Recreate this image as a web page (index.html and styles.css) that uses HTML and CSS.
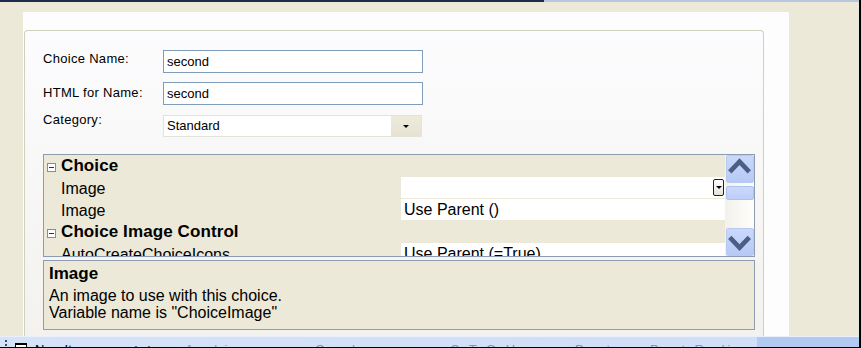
FILE: index.html
```html
<!DOCTYPE html>
<html>
<head>
<meta charset="utf-8">
<link rel="stylesheet" href="styles.css">
</head>
<body>
<div class="frame">
  <div class="topline"></div>
  <div class="main">
    <div class="leftstrip"></div>
    <div class="panel">
      <div class="groupbox">
        <div class="form">
          <div class="lbl l1">Choice Name:</div>
          <div class="input">second</div>
          <div class="lbl l2">HTML for Name:</div>
          <div class="input">second</div>
          <div class="lbl l3">Category:</div>
          <div class="combo"><span class="combo-text">Standard</span><span class="combo-btn"><span class="tri"></span></span></div>
        </div>
        <div class="pgrid">
          <div class="rows">
            <div class="row cat"><span class="toggle"><span class="minus"></span></span><span class="catname">Choice</span></div>
            <div class="row prop"><span class="name">Image</span><span class="val val-dd"><span class="ddbtn"><span class="tri"></span></span></span></div>
            <div class="row prop"><span class="name">Image</span><span class="val">Use Parent ()</span></div>
            <div class="row cat"><span class="toggle"><span class="minus"></span></span><span class="catname">Choice Image Control</span></div>
            <div class="row prop"><span class="name">AutoCreateChoiceIcons</span><span class="val">Use Parent (=True)</span></div>
          </div>
          <div class="vscroll">
            <div class="sbtn"><svg width="28" height="28" viewBox="0 0 28 28"><polyline points="3,17 13.5,6 24,17" fill="none" stroke="#4A5E86" stroke-width="5" stroke-linejoin="miter"/></svg></div>
            <div class="thumb"></div>
            <div class="track"></div>
            <div class="sbtn"><svg width="28" height="28" viewBox="0 0 28 28"><polyline points="3,9 13.5,20 24,9" fill="none" stroke="#4A5E86" stroke-width="5" stroke-linejoin="miter"/></svg></div>
          </div>
        </div>
        <div class="desc">
          <div class="desc-title">Image</div>
          <div class="desc-line">An image to use with this choice.</div>
          <div class="desc-line">Variable name is "ChoiceImage"</div>
        </div>
      </div>
    </div>
    <div class="rightarea"></div>
  </div>
  <div class="toolbar">
    <span class="grip"></span>
    <span class="tb-icon"></span>
    <span class="tb-item tb-new">New Item</span>
    <span class="tb-item tb-arrow">◄</span>
    <span class="tb-item tb-arrow2">►</span>
    <span class="tb-item tb-gray g1">Arabic</span>
    <span class="tb-item tb-gray g2">Candy</span>
    <span class="tb-item tb-gray g3">C T O Hvac</span>
    <span class="tb-item tb-gray g4">Poster</span>
    <span class="tb-item tb-gray g5">Post Radio</span>
  </div>
</div>
</body>
</html>
```
FILE: styles.css
```css
html, body {
  margin: 0;
  padding: 0;
  background: #ECE9D8;
  overflow: hidden;
}
.frame {
  width: 861px;
  height: 348px;
  box-sizing: border-box;
  border-right: 2px solid #000;
  border-bottom: 1px solid #000;
  overflow: hidden;
  background: #ECE9D8;
  font-family: "Liberation Sans", Arial, sans-serif;
}
.topline {
  height: 2px;
  background: linear-gradient(to right, #1F2B4C 0, #1F2B4C 544px, #B8C6DE 544px, #B8C6DE 100%);
}
.main {
  display: flex;
  height: 334px;
}
.leftstrip {
  width: 23px;
  flex: none;
  background: #ECE9D8;
}
.panel {
  width: 766px;
  flex: none;
  margin-top: 10px;
  height: 324px;
  box-sizing: border-box;
  background: #FDFDFE;
  padding: 18px 0 0 1px;
}
.rightarea {
  flex: 1;
  background: #ECE9D8;
}
.groupbox {
  width: 740px;
  height: 306px;
  box-sizing: border-box;
  border: 1px solid #D0D0BF;
  border-bottom: none;
  border-radius: 4px 4px 0 0;
  background: linear-gradient(#FCFCFE, #F3F2EE);
  padding: 19px 0 0 18px;
}
.form {
  display: grid;
  grid-template-columns: 120px 260px;
  grid-template-rows: 23px 23px 23px;
  row-gap: 9px;
}
.lbl {
  font-size: 13px;
  line-height: 15px;
  letter-spacing: 0.3px;
  color: #000;
  align-self: start;
}
.l1 { margin-top: 1px; }
.l2 { margin-top: 3px; }
.l3 { margin-top: -2px; }
.input {
  box-sizing: border-box;
  height: 23px;
  border: 1px solid #7F9DB9;
  background: #fff;
  padding-left: 3px;
  font-size: 13px;
  line-height: 21px;
  color: #000;
}
.combo {
  box-sizing: border-box;
  height: 22px;
  margin-top: 1px;
  width: 259px;
  border: 1px solid #E4E3DA;
  background: #fff;
  display: flex;
  align-items: stretch;
}
.combo-text {
  flex: 1;
  padding-left: 3px;
  font-size: 13px;
  line-height: 20px;
  color: #000;
}
.combo-btn {
  width: 30px;
  background: linear-gradient(#EEEBDD, #E6E3D3);
  display: flex;
  align-items: center;
  justify-content: center;
}
.tri {
  width: 0;
  height: 0;
  border-left: 3px solid transparent;
  border-right: 3px solid transparent;
  border-top: 3px solid #000;
}
.pgrid {
  margin-top: 17px;
  width: 712px;
  height: 103px;
  box-sizing: border-box;
  border: 1px solid #8E9CB2;
  background: #ECE9D8;
  display: flex;
}
.rows {
  width: 681px;
  overflow: hidden;
  flex: none;
}
.row {
  display: flex;
  height: 22px;
  font-size: 16px;
  line-height: 22px;
  color: #000;
}
.row.cat {
  align-items: center;
}
.toggle {
  width: 7px;
  height: 7px;
  border: 1px solid #8C8C8C;
  background: #fff;
  margin-left: 3px;
  margin-right: 5px;
  margin-top: 3px;
  display: flex;
  align-items: center;
  justify-content: center;
  flex: none;
}
.minus {
  width: 5px;
  height: 1px;
  background: #333;
}
.catname {
  font-weight: bold;
  font-size: 17px;
  line-height: 22px;
  letter-spacing: 0.1px;
}
.name {
  width: 340px;
  padding-left: 17px;
  flex: none;
  padding-top: 1px;
  line-height: 21px;
}
.val {
  width: 324px;
  flex: none;
  box-sizing: border-box;
  height: 22px;
  background: #fff;
  border-bottom: 1px solid #ECE9D8;
  padding-left: 3px;
  padding-top: 1px;
  line-height: 20px;
  display: flex;
  justify-content: flex-start;
  align-items: flex-start;
}
.val-dd {
  justify-content: flex-end;
}
.ddbtn {
  width: 9px;
  height: 15px;
  border: 1px solid #222;
  border-radius: 2px;
  background: linear-gradient(#FFFFFF, #E4E2DA);
  margin-right: 1px;
  margin-top: 1px;
  display: flex;
  align-items: center;
  justify-content: center;
}
.vscroll {
  width: 29px;
  flex: none;
  display: flex;
  flex-direction: column;
  background: linear-gradient(to right, #F3F1EB, #FEFEFB);
  padding-left: 1px;
  box-sizing: border-box;
}
.sbtn {
  height: 28px;
  box-sizing: border-box;
  border: 1px solid #B8C9F2;
  border-radius: 2px;
  background: linear-gradient(#CAD8FB, #B6C9F5);
  display: flex;
  align-items: center;
  justify-content: center;
}
.sbtn svg {
  display: block;
}
.thumb {
  margin-top: 3px;
  height: 14px;
  box-sizing: border-box;
  border: 1px solid #AFC2EE;
  border-radius: 2px;
  background: linear-gradient(#CBD9FB, #BCCDF7);
}
.track {
  flex: 1;
}
.desc {
  margin-top: 3px;
  width: 712px;
  height: 70px;
  box-sizing: border-box;
  border: 1px solid #8E9CB2;
  background: #ECE9D8;
  padding: 3px 0 0 5px;
  color: #000;
}
.desc-title {
  font-weight: bold;
  font-size: 17px;
  line-height: 20px;
  margin-bottom: 3px;
}
.desc-line {
  font-size: 16px;
  line-height: 17px;
}
.toolbar {
  height: 11px;
  background: linear-gradient(to right, #D5E2F7 0, #D0DEF6 757px, #B3CAF0 757px, #B3CAF0 100%);
  border-top: 1px solid #E9F0FB;
  box-sizing: border-box;
  position: relative;
  overflow: hidden;
  font-size: 13px;
  white-space: nowrap;
}
.grip {
  position: absolute;
  left: 5px;
  top: 3px;
  width: 2px;
  height: 8px;
  background: repeating-linear-gradient(#33507E 0 2px, transparent 2px 4px);
}
.tb-icon {
  position: absolute;
  left: 15px;
  top: 6px;
  width: 10px;
  height: 10px;
  border: 1px solid #000;
  border-top-width: 2px;
  background: #fff;
}
.tb-item {
  position: absolute;
  top: 5px;
  line-height: 15px;
  color: #000;
}
.tb-new { left: 35px; }
.tb-arrow { left: 127px; font-size: 12px; }
.tb-arrow2 { left: 146px; font-size: 12px; }
.tb-gray { color: #8A94A8; letter-spacing: 3px; }
.g1 { left: 185px; }
.g2 { left: 315px; }
.g3 { left: 450px; }
.g4 { left: 575px; }
.g5 { left: 650px; }
```
